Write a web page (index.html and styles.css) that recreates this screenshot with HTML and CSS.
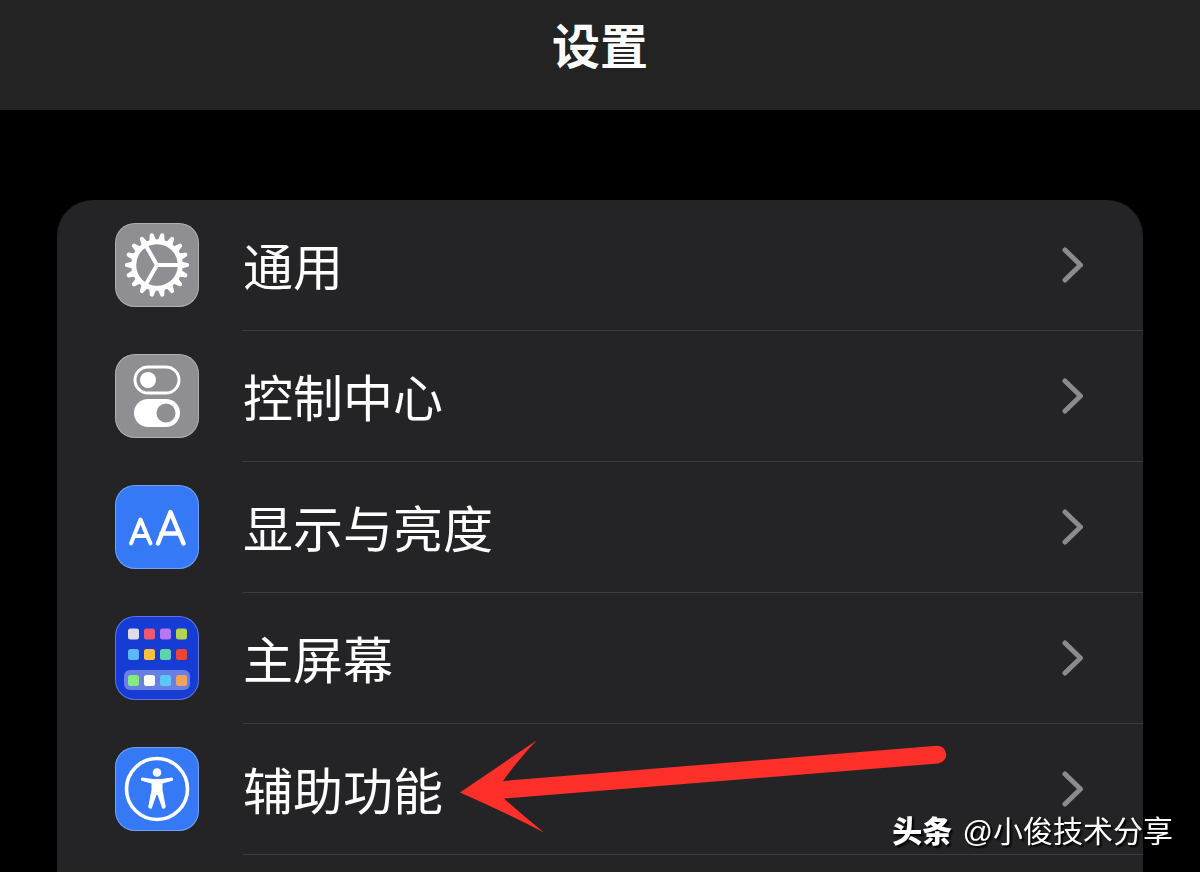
FILE: index.html
```
<!DOCTYPE html>
<html lang="zh-CN">

<head>
    <meta charset="UTF-8">
    <meta name="viewport" content="width=device-width, initial-scale=1.0">
    <title>设置</title>
    <link rel="stylesheet" href="styles.css">
</head>

<body>
    <header class="navbar">
        <h1 class="navbar-title">设置</h1>
    </header>

    <main class="content">
        <ul class="settings-list">
            <li class="settings-item">
                <a class="settings-link" href="#general">
                    <svg class="icon icon-gray" viewBox="0 0 84 84" aria-hidden="true">
                        <defs>
                            <path id="teeth" d="M38.400 18L40.200 10.600Q42 9 43.800 10.600L45.600 18ZM38.400 66L40.200 73.400Q42 75 43.800 73.400L45.600 66Z" />
                        </defs>
                        <g fill="#fff">
                            <use href="#teeth" transform="rotate(10 42 42)" />
                            <use href="#teeth" transform="rotate(30 42 42)" />
                            <use href="#teeth" transform="rotate(50 42 42)" />
                            <use href="#teeth" transform="rotate(70 42 42)" />
                            <use href="#teeth" transform="rotate(90 42 42)" />
                            <use href="#teeth" transform="rotate(110 42 42)" />
                            <use href="#teeth" transform="rotate(130 42 42)" />
                            <use href="#teeth" transform="rotate(150 42 42)" />
                            <use href="#teeth" transform="rotate(170 42 42)" />
                        </g>
                        <g fill="none" stroke="#fff">
                            <circle cx="42" cy="42" r="23.300" stroke-width="5" />
                            <path d="M42 42H65M42 42L30.500 22M42 42L30.500 62" stroke-width="4" />
                        </g>
                    </svg>
                    <span class="settings-label">通用</span>
                    <svg class="chevron" viewBox="0 0 22 36" aria-hidden="true"><path d="M3 3L18.500 18L3 33" /></svg>
                </a>
            </li>
            <li class="settings-item">
                <a class="settings-link" href="#control-center">
                    <svg class="icon icon-gray" viewBox="0 0 84 84" aria-hidden="true">
                        <rect x="20" y="13" width="44" height="26" rx="13" fill="none" stroke="#fff" stroke-width="3" />
                        <circle cx="33" cy="26" r="8" fill="#fff" />
                        <rect x="19" y="45" width="46" height="28" rx="14" fill="#fff" />
                        <circle cx="51" cy="59" r="9.500" fill="#8e8e93" />
                    </svg>
                    <span class="settings-label">控制中心</span>
                    <svg class="chevron" viewBox="0 0 22 36" aria-hidden="true"><path d="M3 3L18.500 18L3 33" /></svg>
                </a>
            </li>
            <li class="settings-item">
                <a class="settings-link" href="#display">
                    <svg class="icon icon-blue" viewBox="0 0 84 84" aria-hidden="true">
                        <g fill="none" stroke="#fff" stroke-linecap="round" stroke-linejoin="round">
                            <path d="M16 58.500L25.500 34.500L35.500 58.500M19 51H32.500" stroke-width="4" />
                            <path d="M43 58.500L55.500 27L68.500 58.500M46.500 48.500H64.500" stroke-width="4.500" />
                        </g>
                    </svg>
                    <span class="settings-label">显示与亮度</span>
                    <svg class="chevron" viewBox="0 0 22 36" aria-hidden="true"><path d="M3 3L18.500 18L3 33" /></svg>
                </a>
            </li>
            <li class="settings-item">
                <a class="settings-link" href="#home-screen">
                    <svg class="icon icon-navy" viewBox="0 0 84 84" aria-hidden="true">
                        <rect x="9" y="54" width="66" height="20" rx="6" fill="#6880e3" />
                        <rect x="13" y="12.500" width="11" height="11" rx="2.500" fill="#dedce6" />
                        <rect x="29" y="12.500" width="11" height="11" rx="2.500" fill="#ef5870" />
                        <rect x="45" y="12.500" width="11" height="11" rx="2.500" fill="#b677f3" />
                        <rect x="61" y="12.500" width="11" height="11" rx="2.500" fill="#b4d450" />
                        <rect x="13" y="33" width="11" height="11" rx="2.500" fill="#5bb7f6" />
                        <rect x="29" y="33" width="11" height="11" rx="2.500" fill="#fac03e" />
                        <rect x="45" y="33" width="11" height="11" rx="2.500" fill="#5fd3ac" />
                        <rect x="61" y="33" width="11" height="11" rx="2.500" fill="#ec4536" />
                        <rect x="13" y="59" width="11" height="11" rx="2.500" fill="#83ec81" />
                        <rect x="29" y="59" width="11" height="11" rx="2.500" fill="#fff" />
                        <rect x="45" y="59" width="11" height="11" rx="2.500" fill="#5cc6f5" />
                        <rect x="61" y="59" width="11" height="11" rx="2.500" fill="#f0a35a" />
                    </svg>
                    <span class="settings-label">主屏幕</span>
                    <svg class="chevron" viewBox="0 0 22 36" aria-hidden="true"><path d="M3 3L18.500 18L3 33" /></svg>
                </a>
            </li>
            <li class="settings-item">
                <a class="settings-link" href="#accessibility">
                    <svg class="icon icon-blue" viewBox="0 0 84 84" aria-hidden="true">
                        <circle cx="42" cy="42" r="30.500" fill="none" stroke="#fff" stroke-width="3.600" />
                        <circle cx="42" cy="25.500" r="4.300" fill="#fff" />
                        <path d="M27 30.500L38 32H46L57 30.500Q59 31.800 57.500 33.800L47.500 36.500V43L50.800 60Q49.500 62.500 47.300 61.500L42.600 48H41.400L36.700 61.500Q34.500 62.500 33.200 60L36.500 43V36.500L26.500 33.800Q25 31.800 27 30.500Z" fill="#fff" />
                    </svg>
                    <span class="settings-label">辅助功能</span>
                    <svg class="chevron" viewBox="0 0 22 36" aria-hidden="true"><path d="M3 3L18.500 18L3 33" /></svg>
                </a>
                <svg class="arrow" viewBox="0 0 488 94" aria-hidden="true">
                    <path d="M0 52.500L76.500 0.500Q58 20 43 41L476.500 5.700A8.900 8.900 0 0 1 478 23.500L44 58.500Q60 73 84 92.500Q40 70 0 52.500Z" />
                </svg>
            </li>
        </ul>
    </main>

    <div class="watermark"><strong class="watermark-brand">头条</strong> <span>@小俊技术分享</span></div>
</body>

</html>
```

FILE: styles.css
```
* {
    box-sizing: border-box;
}

body {
    display: flex;
    flex-direction: column;
    min-height: 100vh;
    margin: 0;
    background-color: #000;
    color: #fff;
    font-family: "Noto Sans CJK SC", sans-serif;
}

.navbar {
    display: flex;
    justify-content: center;
    height: 110px;
    padding-top: 8px;
    background-color: #232323;
}

.navbar-title {
    margin: 0;
    font-size: 48px;
    font-weight: 700;
    line-height: 70px;
}

.content {
    display: flex;
    flex: 1;
    padding: 90px 57px 0;
}

.settings-list {
    flex: 1;
    margin: 0;
    padding: 0;
    list-style: none;
    background-color: #242426;
    border-radius: 36px 36px 0 0;
}

.settings-item {
    position: relative;
}

/* separator starts under the label */
.settings-item::after {
    content: "";
    display: block;
    height: 1px;
    margin-left: 186px;
    background-color: #3d3d40;
}

.settings-link {
    display: flex;
    align-items: center;
    height: 130px;
    padding: 0 59px 0 58px;
    color: #fff;
    text-decoration: none;
}

.icon {
    width: 84px;
    height: 84px;
    margin-right: 44px;
    border-radius: 20px;
    box-shadow: inset 0 0 0 1px rgba(255, 255, 255, 0.3);
}

.icon-gray {
    background-color: #8e8e93;
}

.icon-blue {
    background-color: #3579f6;
}

.icon-navy {
    background-color: #163cd4;
}

.settings-label {
    flex: 1;
    padding-bottom: 2px;
    font-size: 50px;
    font-weight: 400;
    line-height: 72px;
}

.chevron {
    width: 22px;
    height: 36px;
    fill: none;
    stroke: #8b8b8e;
    stroke-width: 5px;
    stroke-linecap: round;
    stroke-linejoin: round;
}

/* pointer drawn over the accessibility row */
.arrow {
    position: absolute;
    top: 16px;
    left: 403px;
    width: 488px;
    height: 94px;
    fill: #ff3029;
    pointer-events: none;
}

.watermark {
    position: fixed;
    right: 27px;
    bottom: 18px;
    font-family: "Liberation Sans", "Noto Sans CJK SC", sans-serif;
    font-size: 30px;
    line-height: 44px;
    text-shadow: 2px 2px 2px #000;
}

.watermark-brand {
    margin-right: 2px;
    font-family: "Noto Sans CJK SC", sans-serif;
    font-weight: 900;
}
```
